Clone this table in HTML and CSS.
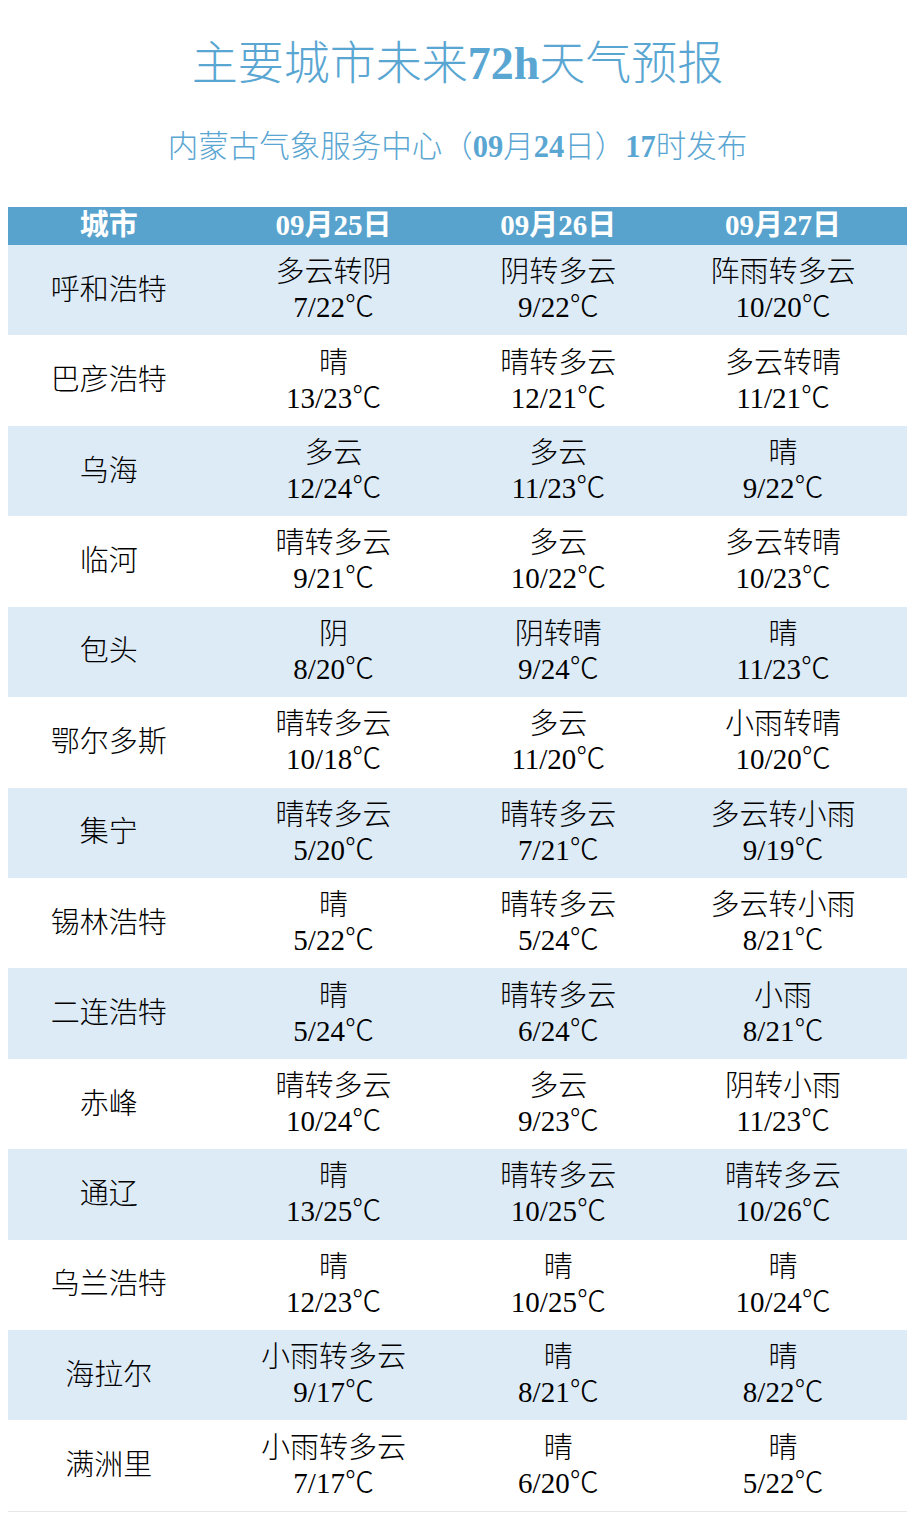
FILE: index.html
```html
<!DOCTYPE html>
<html lang="zh-CN">
<head>
<meta charset="utf-8">
<title>主要城市未来72h天气预报</title>
<link rel="stylesheet" href="styles.css">
</head>
<body>
<div class="page">
  <h1 class="title">主要城市未来<b>72h</b>天气预报</h1>
  <p class="subtitle">内蒙古气象服务中心（<b>09</b>月<b>24</b>日）<b>17</b>时发布</p>
  <div class="table">
    <div class="row head">
      <div class="cell">城市</div>
      <div class="cell">09月25日</div>
      <div class="cell">09月26日</div>
      <div class="cell">09月27日</div>
    </div>
    <div class="row"><div class="cell">呼和浩特</div><div class="cell"><span>多云转阴</span><span>7/22℃</span></div><div class="cell"><span>阴转多云</span><span>9/22℃</span></div><div class="cell"><span>阵雨转多云</span><span>10/20℃</span></div></div>
    <div class="row"><div class="cell">巴彦浩特</div><div class="cell"><span>晴</span><span>13/23℃</span></div><div class="cell"><span>晴转多云</span><span>12/21℃</span></div><div class="cell"><span>多云转晴</span><span>11/21℃</span></div></div>
    <div class="row"><div class="cell">乌海</div><div class="cell"><span>多云</span><span>12/24℃</span></div><div class="cell"><span>多云</span><span>11/23℃</span></div><div class="cell"><span>晴</span><span>9/22℃</span></div></div>
    <div class="row"><div class="cell">临河</div><div class="cell"><span>晴转多云</span><span>9/21℃</span></div><div class="cell"><span>多云</span><span>10/22℃</span></div><div class="cell"><span>多云转晴</span><span>10/23℃</span></div></div>
    <div class="row"><div class="cell">包头</div><div class="cell"><span>阴</span><span>8/20℃</span></div><div class="cell"><span>阴转晴</span><span>9/24℃</span></div><div class="cell"><span>晴</span><span>11/23℃</span></div></div>
    <div class="row"><div class="cell">鄂尔多斯</div><div class="cell"><span>晴转多云</span><span>10/18℃</span></div><div class="cell"><span>多云</span><span>11/20℃</span></div><div class="cell"><span>小雨转晴</span><span>10/20℃</span></div></div>
    <div class="row"><div class="cell">集宁</div><div class="cell"><span>晴转多云</span><span>5/20℃</span></div><div class="cell"><span>晴转多云</span><span>7/21℃</span></div><div class="cell"><span>多云转小雨</span><span>9/19℃</span></div></div>
    <div class="row"><div class="cell">锡林浩特</div><div class="cell"><span>晴</span><span>5/22℃</span></div><div class="cell"><span>晴转多云</span><span>5/24℃</span></div><div class="cell"><span>多云转小雨</span><span>8/21℃</span></div></div>
    <div class="row"><div class="cell">二连浩特</div><div class="cell"><span>晴</span><span>5/24℃</span></div><div class="cell"><span>晴转多云</span><span>6/24℃</span></div><div class="cell"><span>小雨</span><span>8/21℃</span></div></div>
    <div class="row"><div class="cell">赤峰</div><div class="cell"><span>晴转多云</span><span>10/24℃</span></div><div class="cell"><span>多云</span><span>9/23℃</span></div><div class="cell"><span>阴转小雨</span><span>11/23℃</span></div></div>
    <div class="row"><div class="cell">通辽</div><div class="cell"><span>晴</span><span>13/25℃</span></div><div class="cell"><span>晴转多云</span><span>10/25℃</span></div><div class="cell"><span>晴转多云</span><span>10/26℃</span></div></div>
    <div class="row"><div class="cell">乌兰浩特</div><div class="cell"><span>晴</span><span>12/23℃</span></div><div class="cell"><span>晴</span><span>10/25℃</span></div><div class="cell"><span>晴</span><span>10/24℃</span></div></div>
    <div class="row"><div class="cell">海拉尔</div><div class="cell"><span>小雨转多云</span><span>9/17℃</span></div><div class="cell"><span>晴</span><span>8/21℃</span></div><div class="cell"><span>晴</span><span>8/22℃</span></div></div>
    <div class="row"><div class="cell">满洲里</div><div class="cell"><span>小雨转多云</span><span>7/17℃</span></div><div class="cell"><span>晴</span><span>6/20℃</span></div><div class="cell"><span>晴</span><span>5/22℃</span></div></div>
  </div>
</div>
</body>
</html>
```
FILE: styles.css
```css
html, body {
  margin: 0;
  padding: 0;
  background: #ffffff;
}

body {
  font-family: "Liberation Serif", "Noto Sans CJK SC", serif;
  color: #000000;
}

.page {
  padding: 0 8px;
}

.title {
  margin: 0;
  padding-top: 36px;
  height: 56px;
  line-height: 56px;
  font-size: 46px;
  font-weight: 300;
  color: #5aa6d2;
  text-align: center;
}

.title b,
.subtitle b {
  font-weight: 700;
}

.subtitle {
  margin: 35px 0 0;
  height: 40px;
  line-height: 40px;
  font-size: 30.5px;
  font-weight: 300;
  color: #5aa6d2;
  text-align: center;
}

.table {
  margin-top: 40px;
  border-bottom: 1px solid #e4e8e6;
}

.row {
  display: grid;
  grid-template-columns: repeat(4, 1fr);
  height: 90.43px;
  background: #ffffff;
}

.row:nth-child(even) {
  background: #ddebf7;
}

.row.head {
  height: 38px;
  background: #57a3ce;
}

.cell {
  display: flex;
  flex-direction: column;
  align-items: center;
  justify-content: center;
  padding-right: 23px;
  font-size: 29px;
  line-height: 35px;
  font-weight: 300;
  white-space: nowrap;
}

.head .cell {
  display: block;
  color: #ffffff;
  font-weight: 700;
  line-height: 37px;
  text-align: center;
}
```
